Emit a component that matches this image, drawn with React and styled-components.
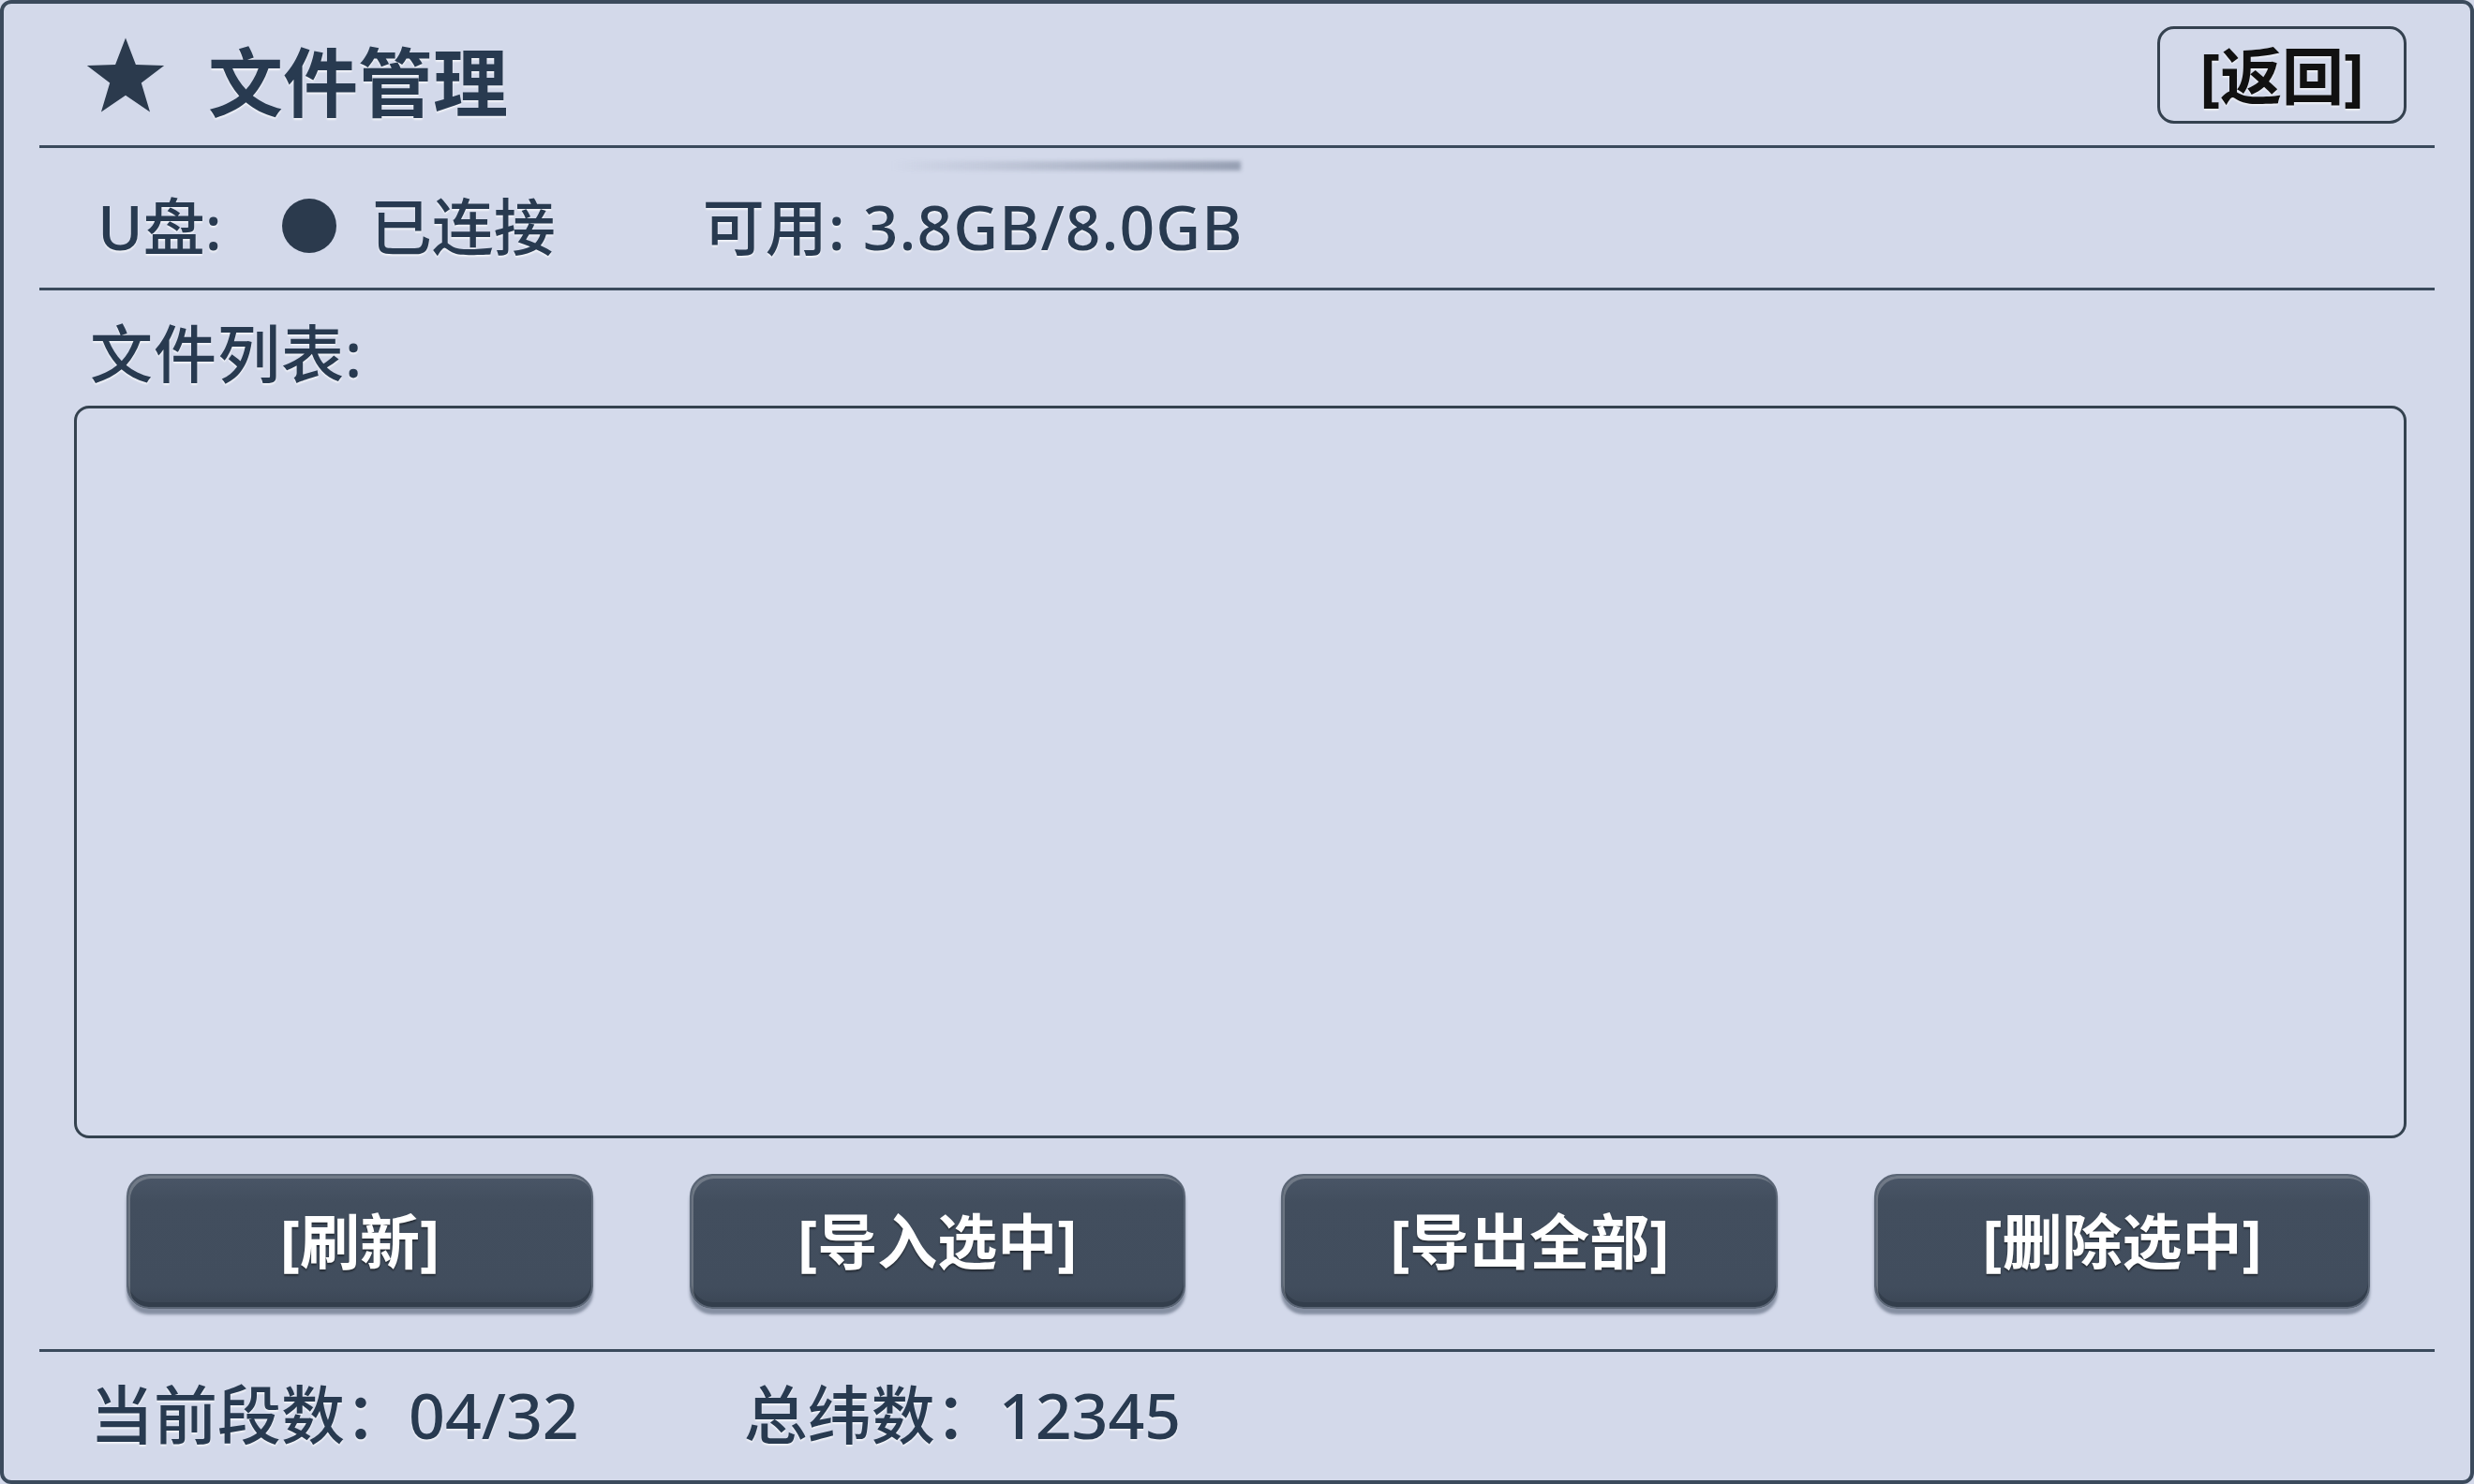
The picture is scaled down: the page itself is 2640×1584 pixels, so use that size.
import React from "react";
import styled, { createGlobalStyle } from "styled-components";

const GlobalStyle = createGlobalStyle`
  html, body {
    margin: 0;
    padding: 0;
    background: #d3d9ea;
  }
`;

const Frame = styled.div`
  position: relative;
  width: 2640px;
  height: 1584px;
  box-sizing: border-box;
  border: 4px solid #3b4a5c;
  border-radius: 12px;
  background: #d3d9ea;
  padding: 0 38px;
  display: flex;
  flex-direction: column;
  font-family: "Noto Sans", "Noto Sans CJK SC", sans-serif;
  color: #283a50;
  text-shadow: 0 2px 2px rgba(255, 255, 255, 0.7);
`;

const Glare = styled.div`
  position: absolute;
  left: 947px;
  top: 168px;
  width: 373px;
  height: 10px;
  background: linear-gradient(to right, rgba(130, 140, 160, 0), rgba(130, 140, 160, 0.75));
  filter: blur(2px);
`;

const Header = styled.div`
  height: 151px;
  display: flex;
  align-items: center;
  padding: 0 30px 0 50px;
  border-bottom: 3px solid #3a4a5c;
`;

const Title = styled.h1`
  margin: 14px 0 0 46px;
  font-size: 80px;
  font-weight: 700;
  line-height: 1;
  flex: 1;
`;

const BackButton = styled.button`
  width: 266px;
  height: 104px;
  box-sizing: border-box;
  border: 3px solid #34414f;
  border-radius: 18px;
  background: transparent;
  font-family: inherit;
  font-size: 66px;
  font-weight: 700;
  line-height: 1;
  color: #111;
  padding: 0;
  text-shadow: 0 2px 2px rgba(255, 255, 255, 0.6);
`;

const StatusRow = styled.div`
  height: 152px;
  box-sizing: border-box;
  display: flex;
  align-items: center;
  padding: 16px 0 0 62px;
  border-bottom: 3px solid #3a4a5c;
  font-size: 66px;
  font-weight: 500;
  line-height: 1;
`;

const Dot = styled.span`
  width: 58px;
  height: 58px;
  border-radius: 50%;
  background: #2b3a4d;
  margin: 0 36px 0 64px;
  flex: none;
`;

const Usage = styled.span`
  margin-left: 157px;
  letter-spacing: 1px;
`;

const SectionLabel = styled.div`
  margin: 34px 0 22px 54px;
  font-size: 67px;
  font-weight: 500;
  line-height: 1;
  letter-spacing: 1px;
`;

const FileList = styled.div`
  height: 782px;
  box-sizing: border-box;
  margin: 0 30px 0 37px;
  border: 3px solid #34424f;
  border-radius: 16px;
  background: #d4daeb;
`;

const ButtonRow = styled.div`
  display: flex;
  justify-content: space-between;
  margin: 38px 0 43px;
  padding: 0 69px 0 93px;
`;

const ActionButton = styled.button`
  width: ${(p) => p.$w}px;
  height: 144px;
  box-sizing: border-box;
  border: 2px solid #5b6676;
  border-radius: 24px;
  background: linear-gradient(#4a5667, #424e5e 20%, #414d5d 85%, #3a4554);
  box-shadow: inset 2px 3px 0 rgba(255, 255, 255, 0.22),
    inset 0 -5px 0 #333e4c, 0 6px 3px rgba(70, 82, 102, 0.55);
  color: #fff;
  font-family: inherit;
  font-size: 64px;
  font-weight: 700;
  line-height: 1;
  padding: 0;
  text-shadow: 0 2px 2px rgba(0, 0, 0, 0.45);
`;

const Footer = styled.div`
  display: flex;
  align-items: center;
  padding: 33px 0 0 54px;
  border-top: 3px solid #3a4a5c;
  font-size: 68px;
  font-weight: 500;
  line-height: 1;
`;

const FooterItem = styled.span`
  margin-right: ${(p) => p.$gap || 0}px;
`;

const Star = () => (
  <svg width="84" height="84" viewBox="0 0 100 96">
    <polygon
      points="50,1 63,35 99,36 70,58 81,95 50,74 19,95 30,58 1,36 37,35"
      fill="#2b3a4d"
    />
  </svg>
);

const actions = [
  { label: "[刷新]", w: 498 },
  { label: "[导入选中]", w: 529 },
  { label: "[导出全部]", w: 530 },
  { label: "[删除选中]", w: 529 },
];

export default function App() {
  return (
    <>
      <GlobalStyle />
      <Frame>
        <Glare />
        <Header>
          <Star />
          <Title>文件管理</Title>
          <BackButton>[返回]</BackButton>
        </Header>
        <StatusRow>
          <span>U盘:</span>
          <Dot />
          <span>已连接</span>
          <Usage>可用: 3.8GB/8.0GB</Usage>
        </StatusRow>
        <SectionLabel>文件列表:</SectionLabel>
        <FileList />
        <ButtonRow>
          {actions.map((a) => (
            <ActionButton key={a.label} $w={a.w}>
              {a.label}
            </ActionButton>
          ))}
        </ButtonRow>
        <Footer>
          <FooterItem $gap={176}>当前段数：04/32</FooterItem>
          <FooterItem>总纬数：12345</FooterItem>
        </Footer>
      </Frame>
    </>
  );
}
